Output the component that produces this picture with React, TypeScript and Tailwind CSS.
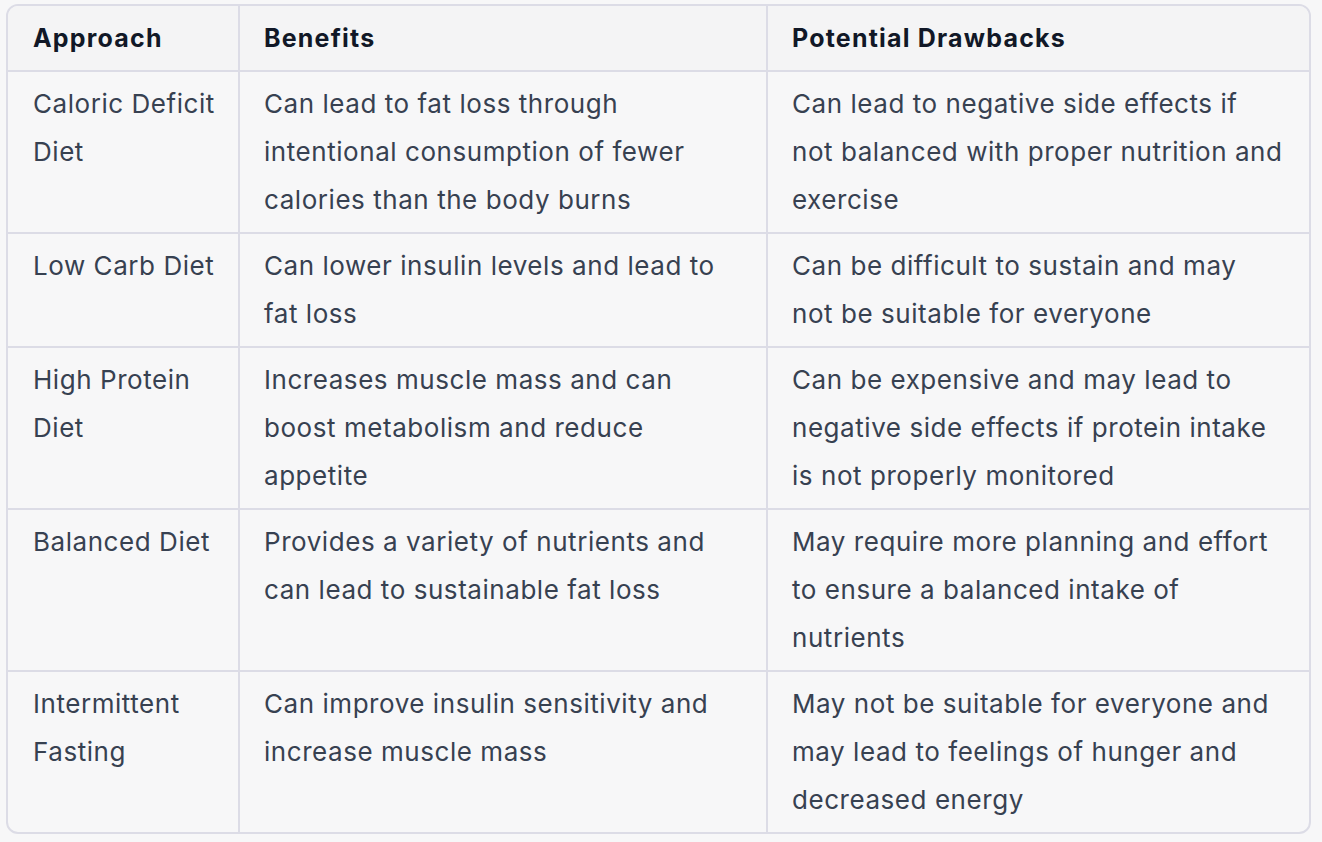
const rows = [
  {
    approach: ["Caloric Deficit", "Diet"],
    benefits: ["Can lead to fat loss through", "intentional consumption of fewer", "calories than the body burns"],
    drawbacks: ["Can lead to negative side effects if", "not balanced with proper nutrition and", "exercise"],
  },
  {
    approach: ["Low Carb Diet"],
    benefits: ["Can lower insulin levels and lead to", "fat loss"],
    drawbacks: ["Can be difficult to sustain and may", "not be suitable for everyone"],
  },
  {
    approach: ["High Protein", "Diet"],
    benefits: ["Increases muscle mass and can", "boost metabolism and reduce", "appetite"],
    drawbacks: ["Can be expensive and may lead to", "negative side effects if protein intake", "is not properly monitored"],
  },
  {
    approach: ["Balanced Diet"],
    benefits: ["Provides a variety of nutrients and", "can lead to sustainable fat loss"],
    drawbacks: ["May require more planning and effort", "to ensure a balanced intake of", "nutrients"],
  },
  {
    approach: ["Intermittent", "Fasting"],
    benefits: ["Can improve insulin sensitivity and", "increase muscle mass"],
    drawbacks: ["May not be suitable for everyone and", "may lead to feelings of hunger and", "decreased energy"],
  },
];

// keep the line breaks of the original table
function Lines({ lines }: { lines: string[] }) {
  return (
    <>
      {lines.map((l, i) => (
        <span key={i} className="block whitespace-nowrap">
          {l}
        </span>
      ))}
    </>
  );
}

export default function App() {
  return (
    <div className="min-h-screen bg-[#f7f7f8] pl-[6px] pr-[11px] pt-[4px] font-['Inter','Noto_Sans',sans-serif] text-[26px] leading-[48px]">
      <div className="overflow-hidden rounded-[12px] border-2 border-[#dcdce6]">
        <table className="w-full table-fixed border-collapse">
          <colgroup>
            <col className="w-[231px]" />
            <col className="w-[528px]" />
            <col />
          </colgroup>
          <thead>
            <tr className="bg-[#f4f4f5] text-left text-[25px] tracking-[1.2px] text-[#111827]">
              <th className="px-[25px] py-2 font-bold">Approach</th>
              <th className="border-l-2 border-[#dcdce6] px-[24px] py-2 font-bold">Benefits</th>
              <th className="border-l-2 border-[#dcdce6] px-[24px] py-2 font-bold">Potential Drawbacks</th>
            </tr>
          </thead>
          <tbody className="tracking-[0.55px] text-[#374151]">
            {rows.map((r) => (
              <tr key={r.approach.join(" ")} className="border-t-2 border-[#dcdce6] align-top">
                <td className="px-[25px] py-2">
                  <Lines lines={r.approach} />
                </td>
                <td className="border-l-2 border-[#dcdce6] px-[24px] py-2">
                  <Lines lines={r.benefits} />
                </td>
                <td className="border-l-2 border-[#dcdce6] px-[24px] py-2">
                  <Lines lines={r.drawbacks} />
                </td>
              </tr>
            ))}
          </tbody>
        </table>
      </div>
    </div>
  );
}
